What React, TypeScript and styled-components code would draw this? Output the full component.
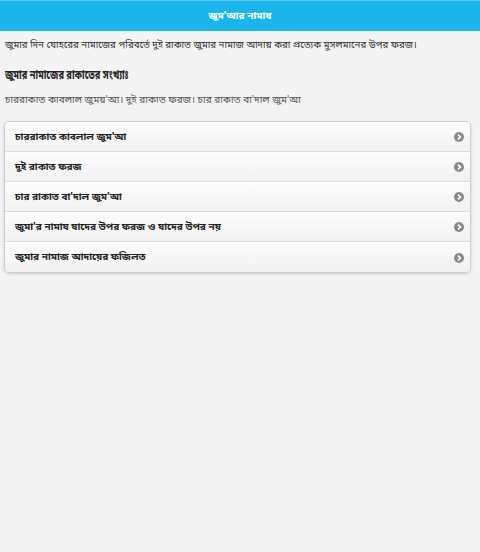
import React from 'react';
import styled, { createGlobalStyle } from 'styled-components';

const items = [
  'চাররাকাত কাবলাল জুম\'আ',
  'দুই রাকাত ফরজ',
  'চার রাকাত বা\'দাল জুম\'আ',
  'জুমা\'র নামায যাদের উপর ফরজ ও যাদের উপর নয়',
  'জুমার নামাজ আদায়ের ফজিলত',
];

const GlobalStyle = createGlobalStyle`
  html, body {
    margin: 0;
    padding: 0;
    background: #f3f3f3;
  }
  body {
    font-family: "Noto Sans Bengali", "Noto Sans", "Liberation Sans", sans-serif;
    color: #333;
  }
`;

class App extends React.Component {
  render() {
    return (
      <Page>
        <GlobalStyle />
        <Header>জুম'আর নামায</Header>
        <Content>
          <Intro>
            জুমার দিন যোহরের নামাজের পরিবর্তে দুই রাকাত জুমার নামাজ আদায় করা প্রত্যেক মুসলমানের উপর ফরজ।
          </Intro>
          <Heading>
            <HeadingText>জুমার নামাজের রাকাতের সংখ্যাঃ</HeadingText>
          </Heading>
          <Note>চাররাকাত কাবলাল জুময়'আ। দুই রাকাত ফরজ। চার রাকাত বা'দাল জুম'আ</Note>
          <List>
            {items.map((text, i) => (
              <Row key={i} last={i === items.length - 1}>
                <RowText>{text}</RowText>
                <Arrow>
                  <svg width="10" height="10" viewBox="0 0 10 10">
                    <circle cx="5" cy="5" r="5" fill="#8a8a8a" />
                    <path d="M4 2.6 L6.4 5 L4 7.4" stroke="#fff" strokeWidth="1.6" fill="none" />
                  </svg>
                </Arrow>
              </Row>
            ))}
          </List>
        </Content>
      </Page>
    );
  }
}

const Page = styled.div`
  min-height: 552px;
  background: #f3f3f3;
`;

const Header = styled.div`
  height: 31px;
  background: #1ab5ea;
  border-top: 1px solid #5fcaf0;
  box-sizing: border-box;
  color: #fff;
  font-size: 10px;
  font-weight: 700;
  display: flex;
  align-items: center;
  justify-content: center;
`;

const Content = styled.div`
  padding: 6px 9px 0 4px;
`;

const Intro = styled.div`
  font-size: 9.7px;
  line-height: 18px;
  padding-left: 1px;
  color: #333;
  white-space: nowrap;
`;

const Heading = styled.div`
  height: 20px;
  margin-top: 10px;
  padding-left: 1px;
  display: flex;
  align-items: center;
`;

const HeadingText = styled.span`
  display: inline-block;
  font-size: 13px;
  font-weight: 700;
  color: #222;
  transform: scaleX(0.71);
  transform-origin: left center;
  white-space: nowrap;
`;

const Note = styled.div`
  font-size: 10px;
  line-height: 18px;
  margin-top: 7px;
  padding-left: 1px;
  color: #555;
`;

const List = styled.div`
  margin-top: 11px;
  border: 1px solid #cdcdcd;
  border-radius: 5px;
  box-shadow: 0 1px 3px rgba(0, 0, 0, 0.15);
  overflow: hidden;
  background: #f7f7f7;
`;

const Row = styled.div<{ last?: boolean }>`
  height: 30px;
  display: flex;
  align-items: center;
  justify-content: space-between;
  padding: 0 6px 0 10px;
  background: linear-gradient(#fbfbfb, #f1f1f1);
  border-bottom: ${p => (p.last ? 'none' : '1px solid #dcdcdc')};
  border-top: 1px solid #fff;
  box-sizing: border-box;
`;

const RowText = styled.span`
  font-size: 10px;
  font-weight: 700;
  color: #222;
`;

const Arrow = styled.span`
  display: flex;
  width: 10px;
  height: 10px;
`;

export default App;
